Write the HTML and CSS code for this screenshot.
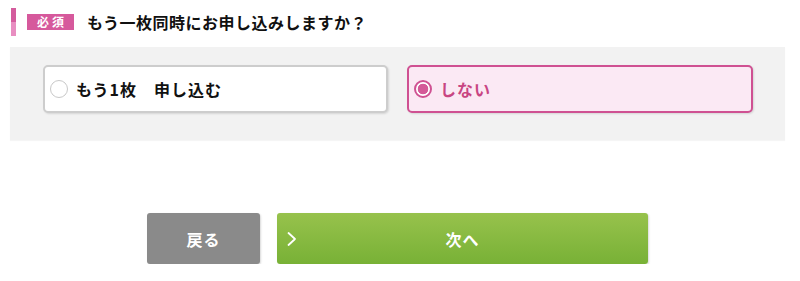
FILE: index.html
```html
<!DOCTYPE html>
<html lang="ja">
<head>
<meta charset="utf-8">
<link rel="stylesheet" href="styles.css">
</head>
<body>
<div class="wrap">
  <div class="q-head">
    <span class="q-bar"></span>
    <span class="badge">必須</span>
    <h2 class="q-title">もう一枚同時にお申し込みしますか？</h2>
  </div>
  <div class="panel">
    <label class="opt">
      <span class="radio"></span>
      <span class="opt-text">もう1枚　申し込む</span>
    </label>
    <label class="opt opt-on">
      <span class="radio radio-on"></span>
      <span class="opt-text">しない</span>
    </label>
  </div>
  <div class="actions">
    <a class="btn btn-back">戻る</a>
    <a class="btn btn-next">
      <svg class="chev" width="12" height="16" viewBox="0 0 12 16"><path d="M2.5 2 L9 8 L2.5 14" fill="none" stroke="#fff" stroke-width="1.8" stroke-linecap="round" stroke-linejoin="round"/></svg>
      <span>次へ</span>
    </a>
  </div>
</div>
</body>
</html>
```

FILE: styles.css
```css
* { box-sizing: border-box; }
html, body { margin: 0; padding: 0; background: #fff; }
body {
  font-family: "Noto Sans CJK JP", "Noto Sans", sans-serif;
  color: #111;
}
.wrap {
  margin-left: 10px;
  width: 775px;
}
.q-head {
  display: flex;
  align-items: center;
  height: 28px;
  margin-top: 8px;
  padding-left: 1px;
}
.q-bar {
  width: 5px;
  height: 28px;
  background: linear-gradient(to bottom, #d45c9d 0, #d45c9d 50%, #e88ec1 50%, #e88ec1 100%);
}
.badge {
  margin-left: 11px;
  width: 47px;
  height: 16px;
  background: #d6599c;
  color: #fff;
  font-size: 12px;
  font-weight: 700;
  line-height: 16px;
  text-align: center;
  letter-spacing: 3px;
  padding-left: 3px;
}
.q-title {
  margin: 0 0 0 13px;
  font-size: 16px;
  font-weight: 700;
  letter-spacing: 0.5px;
  line-height: 28px;
}
.panel {
  margin-top: 11px;
  background: #f2f2f2;
  height: 93px;
  padding: 18px 32px 0 33px;
  display: flex;
  gap: 19px;
  box-shadow: 0 1px 1px rgba(0,0,0,0.04);
}
.opt {
  width: 345px;
  height: 48px;
  background: #fff;
  border: 2px solid #cdcdcd;
  border-radius: 5px;
  box-shadow: 1px 1px 2px rgba(0,0,0,0.12);
  display: flex;
  align-items: center;
  padding-left: 5px;
}
.opt-on {
  width: 346px;
  background: #fbe9f4;
  border-color: #cf5192;
  color: #c84582;
}
.radio {
  width: 18px;
  height: 18px;
  border-radius: 50%;
  border: 1.5px solid #c8c8c8;
  background: #fff;
  flex: none;
}
.radio-on {
  border: 2px solid #cf5192;
  background: radial-gradient(circle, #d45a98 0, #d45a98 5px, #fff 5.6px);
}
.opt-text {
  margin-left: 8px;
  font-size: 16px;
  font-weight: 700;
  letter-spacing: 1px;
}
.actions {
  margin-top: 73px;
  display: flex;
  justify-content: center;
  gap: 17px;
}
.btn {
  height: 51px;
  border-radius: 3px;
  color: #fff;
  font-size: 16px;
  font-weight: 700;
  display: flex;
  align-items: center;
  justify-content: center;
  text-decoration: none;
  letter-spacing: 1px;
  box-shadow: 1px 1px 2px rgba(0,0,0,0.15);
}
.btn-back {
  width: 113px;
  background: #8a8a8a;
}
.btn-next {
  width: 371px;
  background: linear-gradient(to bottom, #97c24c, #78b136);
  position: relative;
}
.chev {
  position: absolute;
  left: 9px;
  top: 18px;
}
```
